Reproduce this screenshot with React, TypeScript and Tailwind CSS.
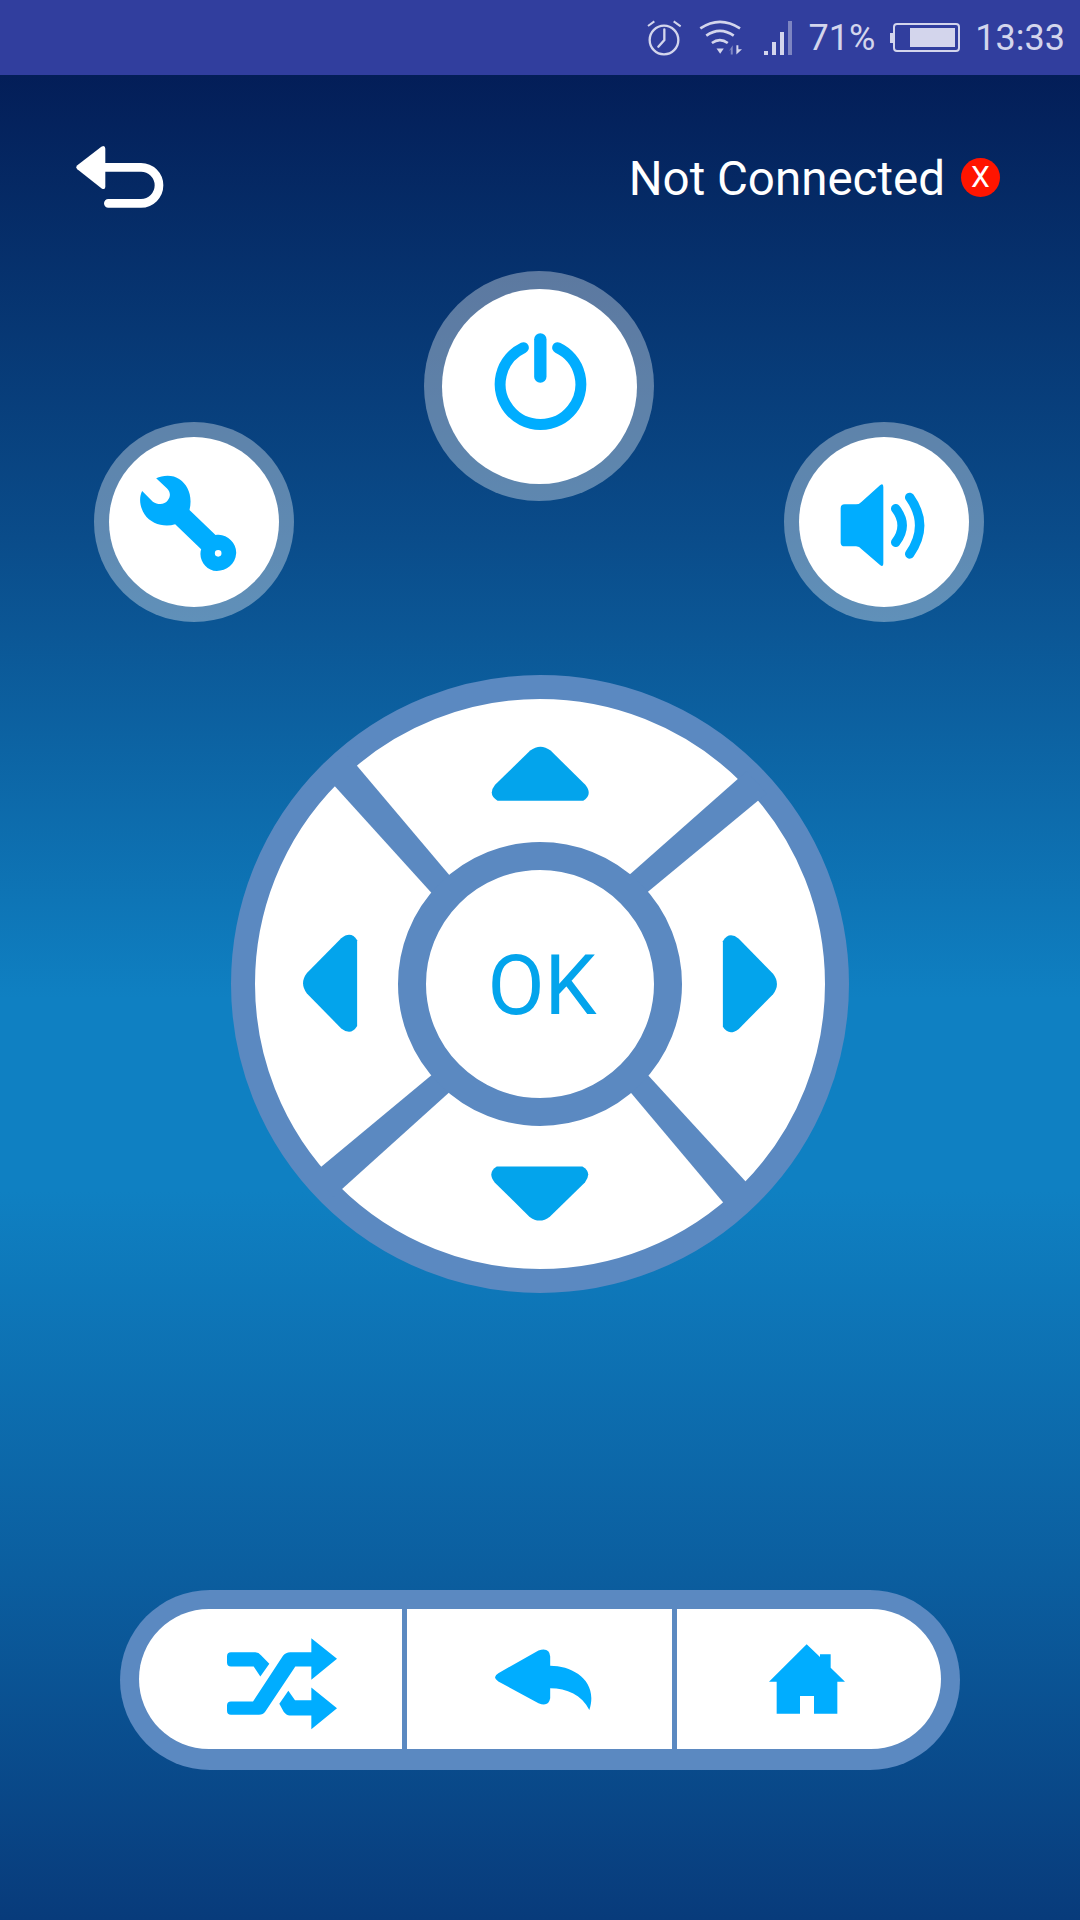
import React from 'react';

const BLUE = '#00adff';
const ARROW = 'M760,222 Q785,203 810,222 L895,306 Q914,330 890,345 L680,345 Q655,330 674,306 Z';

const CircleButton = ({ size, children }: { size: 'lg' | 'sm'; children: React.ReactNode }) => (
  <div
    className={
      size === 'lg'
        ? 'w-[230px] h-[230px] rounded-full bg-white/35 flex items-center justify-center'
        : 'w-[200px] h-[200px] rounded-full bg-white/35 flex items-center justify-center'
    }
  >
    <div
      className={
        size === 'lg'
          ? 'w-[195px] h-[195px] rounded-full bg-white flex items-center justify-center'
          : 'w-[170px] h-[170px] rounded-full bg-white flex items-center justify-center'
      }
    >
      {children}
    </div>
  </div>
);

const StatusBar = () => (
  <div className="h-[75px] bg-[#313e9e] flex items-center justify-end pr-[15px] text-[#d3d5ec] text-[36px] leading-none">
    <svg width="35" height="36" viewBox="20 28 105 108" fill="none" stroke="#d3d5ec" strokeWidth="7">
      <circle cx="71" cy="88" r="43" />
      <path d="M72 56V88L54 108" strokeLinecap="round" />
      <path d="M23 46L42 32M100 32L121 47" strokeWidth="6" />
    </svg>
    <svg className="ml-[17px]" width="43" height="35" viewBox="175 28 130 105">
      <g fill="none" stroke="#d3d5ec" strokeWidth="8">
        <path d="M179 53Q238 13 299 53" />
        <path d="M197 75Q238 46 280 75" />
        <path d="M214 97Q238 80 262 97" />
      </g>
      <path d="M228 114H250L239 130Z" fill="#d3d5ec" />
      <path d="M277 104V132H271V116L265 122Z" fill="#8088c4" />
      <path d="M288 104V132L305 116H294V104Z" fill="#d3d5ec" />
    </svg>
    <svg className="ml-[22px]" width="28" height="34" viewBox="372 30 84 102">
      <g fill="#d3d5ec">
        <rect x="372" y="120" width="12" height="12" />
        <rect x="396" y="93" width="12" height="39" />
        <rect x="420" y="63" width="12" height="69" />
      </g>
      <rect x="444" y="30" width="12" height="102" fill="#7d85c2" />
    </svg>
    <span className="ml-[17px]">71%</span>
    <div className="ml-[15px] flex items-center">
      <div className="w-[3px] h-[10px] bg-[#d3d5ec]" />
      <div className="w-[67px] h-[29px] rounded-[4px] border-2 border-[#d3d5ec] flex justify-end p-[3px]">
        <div className="w-[45px] bg-[#d3d5ec]" />
      </div>
    </div>
    <span className="ml-[15px]">13:33</span>
  </div>
);

const Header = () => (
  <div className="flex items-center justify-between pt-[71px] pl-[76px] pr-[80px]">
    <svg width="88" height="62" viewBox="108 108 264 186">
      <path d="M190 108Q196 108 196 116V230Q196 240 186 236L112 178Q106 172 112 166L184 110Z" fill="#fff" />
      <path d="M192 172H303A54 54 0 0 1 303 280H205" fill="none" stroke="#fff" strokeWidth="26" strokeLinecap="round" />
    </svg>
    <div className="flex items-center">
      <span className="text-white text-[47.5px] leading-none mt-[6px]">Not Connected</span>
      <div className="ml-[16px] w-[39px] h-[39px] rounded-full bg-[#ff1500] flex items-center justify-center text-white text-[30px] leading-none">
        X
      </div>
    </div>
  </div>
);

const TopButtons = () => (
  <div className="mt-[63px] pl-[94px] pr-[96px] flex items-start justify-between">
    <div className="mt-[151px]">
      <CircleButton size="sm">
        <svg width="120" height="120" viewBox="13.5 3 360 360">
          <path
            fillRule="evenodd"
            fill={BLUE}
            d="M80,52 C100,42 130,40 150,55 C175,72 190,105 180,147 L258,222 C290,215 322,245 320,277 C318,310 290,330 262,330 C230,330 205,295 215,265 L137,190 C105,200 65,190 45,160 C30,135 28,110 38,90 L70,122 C85,132 105,132 115,118 C125,105 122,92 112,82 Z M266,267 A10,10 0 1 0 266,287 A10,10 0 1 0 266,267 Z"
          />
        </svg>
      </CircleButton>
    </div>
    <CircleButton size="lg">
      <svg width="120" height="120" viewBox="-6 18 360 360" fill="none" stroke={BLUE} strokeLinecap="round">
        <path d="M178 58V170" strokeWidth="37" />
        <path d="M127 83A121 121 0 1 0 230 83" strokeWidth="33" />
      </svg>
    </CircleButton>
    <div className="mt-[151px]">
      <CircleButton size="sm">
        <svg width="110" height="110" viewBox="-3 -12 330 330">
          <path
            fill={BLUE}
            d="M32,112 Q32,100 44,100 L78,100 Q88,100 95,92 L150,43 Q160,35 160,48 L160,275 Q160,290 150,282 L95,235 Q88,226 78,226 L44,226 Q32,226 32,215 Z"
          />
          <g fill="none" stroke={BLUE} strokeWidth="28" strokeLinecap="round">
            <path d="M197 113Q236 163 197 214" />
            <path d="M239 79Q299 163 239 249" />
          </g>
        </svg>
      </CircleButton>
    </div>
  </div>
);

const DPad = () => (
  <div className="mt-[53px] mx-auto w-[618px] h-[618px] rounded-full bg-white border-[24px] border-[#5b89c1] relative flex items-center justify-center">
    <svg className="absolute top-[-24px] left-[-24px]" width="618" height="618" viewBox="27 37 1514 1514">
      <g fill="#5b89c1">
        <path d="M315,235 L600,572 L560,617 L262,288 Z" />
        <path d="M1290,273 L965,560 L1010,600 L1340,327 Z" />
        <path d="M1252,1352 L967,1013 L1010,975 L1308,1300 Z" />
        <path d="M278,1315 L600,1025 L557,985 L226,1260 Z" />
      </g>
      <g fill="#03a4ec">
        <path d={ARROW} />
        <path d={ARROW} transform="rotate(90 784 793)" />
        <path d={ARROW} transform="rotate(180 784 793)" />
        <path d={ARROW} transform="rotate(270 784 793)" />
      </g>
    </svg>
    <div className="relative w-[284px] h-[284px] rounded-full bg-white border-[28px] border-[#5b89c1] flex items-center justify-center text-[#03a4ec] text-[83px] leading-none">
      <span className="ml-[4px] mt-[3px]">OK</span>
    </div>
  </div>
);

const BottomBar = () => (
  <div className="mt-[297px] mx-auto w-[840px] h-[180px] rounded-full bg-[#5b89c1] pt-[19px] pb-[21px] px-[19px] flex gap-[5px]">
    <div className="w-[263px] rounded-l-[70px] bg-white flex items-center justify-center pl-[22px] pt-[10px]">
      <svg width="110" height="92" viewBox="80 55 330 275" fill={BLUE}>
        <path d="M92,97 L165,97 Q175,97 182,106 L207,132 L180,170 L160,140 L92,140 Q80,140 80,128 L80,109 Q80,97 92,97 Z" />
        <path d="M92,245 L158,245 L248,108 Q256,97 270,97 L333,97 L333,55 L410,117 L333,180 L333,140 L285,140 L195,275 Q188,285 176,285 L92,285 Q80,285 80,273 L80,257 Q80,245 92,245 Z" />
        <path d="M264,213 L284,241 L333,241 L333,203 L410,265 L333,328 L333,287 L268,287 Q258,287 250,276 L237,252 Z" />
      </svg>
    </div>
    <div className="w-[265px] bg-white flex items-center justify-center pl-[7px]">
      <svg width="97" height="61" viewBox="75 88 290 182" fill={BLUE}>
        <path d="M85,160 L205,92 Q238,82 240,110 L240,138 C310,138 385,185 357,270 C335,225 290,205 240,205 L240,235 Q235,262 205,250 L85,185 Q65,172 85,160 Z" />
      </svg>
    </div>
    <div className="flex-1 rounded-r-[70px] bg-white flex items-center justify-center pr-[5px]">
      <svg width="76" height="70" viewBox="895 70 228 208" fill={BLUE}>
        <path d="M1008,70 L1048,108 L1048,100 L1080,100 L1080,140 L1123,182 L1100,182 L1100,278 L1030,278 L1030,225 L988,225 L988,278 L918,278 L918,182 L895,182 Z" />
      </svg>
    </div>
  </div>
);

export default function App() {
  return (
    <div className="w-[1080px] h-[1920px] overflow-hidden font-['Roboto',sans-serif] bg-[linear-gradient(180deg,#031c56_3%,#0a4c8a_28%,#0f80c2_52%,#0f80c2_62%,#0b5e9f_82%,#083b7b_100%)]">
      <StatusBar />
      <Header />
      <TopButtons />
      <DPad />
      <BottomBar />
    </div>
  );
}
